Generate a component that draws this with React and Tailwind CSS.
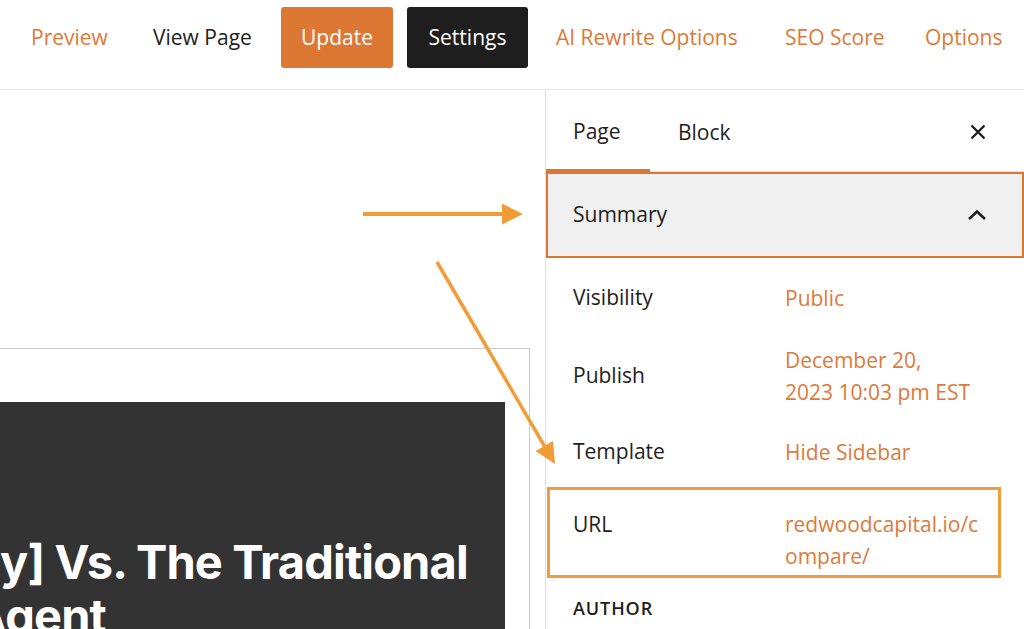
import React from "react";

function XIcon() {
  return (
    <svg width="18" height="18" viewBox="0 0 18 18" fill="none">
      <path d="M2.5 2.5 L15.5 15.5 M15.5 2.5 L2.5 15.5" stroke="#1e1e1e" strokeWidth="2.4" strokeLinecap="butt" />
    </svg>
  );
}

function ChevronUp() {
  return (
    <svg width="20" height="12" viewBox="0 0 20 12" fill="none">
      <path d="M2 10 L10 2.5 L18 10" stroke="#1e1e1e" strokeWidth="2.6" strokeLinecap="butt" strokeLinejoin="miter" />
    </svg>
  );
}

function Row({ label, children, className = "" }) {
  return (
    <div className={"flex " + className}>
      <div className="w-[212px] shrink-0 flex items-center text-[#1e1e1e]">{label}</div>
      <div className="text-[#de7a38] leading-[32px]">{children}</div>
    </div>
  );
}

export default function App() {
  return (
    <div className="relative w-[1024px] h-[629px] overflow-hidden bg-white font-['Open_Sans',sans-serif] text-[21px] text-[#1e1e1e]">
      {/* Top bar */}
      <div className="h-[90px] border-b border-[#e4e4e4] pt-[7px] pl-[31px]">
        <div className="h-[61px] flex items-center">
          <div className="w-[122px] text-[#de7a38]">Preview</div>
          <div className="w-[128px] text-[#1e1e1e]">View Page</div>
          <div className="w-[112px] h-[61px] rounded-[3px] bg-[#dd7834] text-white flex items-center justify-center">Update</div>
          <div className="ml-[14px] w-[121px] h-[61px] rounded-[3px] bg-[#1e1e1e] text-white flex items-center justify-center">Settings</div>
          <div className="ml-[28px] w-[229px] text-[#de7a38]">AI Rewrite Options</div>
          <div className="w-[140px] text-[#de7a38]">SEO Score</div>
          <div className="text-[#de7a38]">Options</div>
        </div>
      </div>

      <div className="flex h-[539px]">
        {/* Canvas */}
        <div className="w-[545px] shrink-0 overflow-hidden pt-[258px]">
          <div className="-ml-[10px] w-[540px] h-[400px] border border-[#c9c9c9] pt-[53px] pr-[24px]">
            <div className="h-[340px] bg-[#333333] overflow-hidden pt-[133px] pl-[10px]">
              <div className="font-['Inter',sans-serif] font-bold text-white text-[47px] leading-[54px] tracking-[-0.018em] whitespace-nowrap">
                <div className="-ml-[1px]">y] Vs. The Traditional</div>
                <div className="-ml-[29px]">Agent</div>
              </div>
            </div>
          </div>
        </div>

        {/* Sidebar */}
        <div className="flex-1 border-l border-[#e0e0e0] flex flex-col">
          <div className="h-[82px] flex">
            <div className="w-[104px] pl-[27px] pt-[5px] flex items-center border-b-[3px] border-[#dc7633]">Page</div>
            <div className="w-[100px] pl-[28px] pt-[3px] flex items-center border-b border-[#e2e2e2]">
              <span className="-mb-[2px]">Block</span>
            </div>
            <div className="flex-1 flex items-center justify-end pr-[37px] border-b border-[#e2e2e2]">
              <div className="mt-[2px]"><XIcon /></div>
            </div>
          </div>

          <div className="h-[86px] border-2 border-[#dc7633] bg-[#f0f0f0] flex items-center justify-between pl-[25px] pr-[35px]">
            <span>Summary</span>
            <ChevronUp />
          </div>

          <div className="pt-[24px] pl-[27px]">
            <Row label="Visibility" className="h-[32px]">Public</Row>
            <Row label="Publish" className="mt-[30px]">
              <div>December 20,</div>
              <div>2023 10:03 pm EST</div>
            </Row>
            <Row label="Template" className="mt-[28px] h-[32px]">Hide Sidebar</Row>
          </div>

          <div className="mt-[19px] ml-[1px] w-[454px] border-[3px] border-[#f39b37] pt-[18px] pb-[3px] pl-[23px]">
            <div className="flex">
              <div className="w-[212px] shrink-0 leading-[32px]">URL</div>
              <div className="text-[#de7a38] leading-[32px]">
                <div>redwoodcapital.io/c</div>
                <div>ompare/</div>
              </div>
            </div>
          </div>

          <div className="mt-[18px] pl-[27px] text-[18px] leading-[24px] font-semibold tracking-[0.05em] uppercase">AUTHOR</div>
        </div>
      </div>

      {/* Annotation arrows */}
      <svg className="absolute inset-0 pointer-events-none" width="1024" height="629" viewBox="0 0 1024 629">
        <line x1="363" y1="214" x2="503" y2="214" stroke="#f29c38" strokeWidth="4" />
        <polygon points="502,203.5 523,214 502,224.5" fill="#f29c38" />
        <line x1="437" y1="262" x2="545" y2="447" stroke="#f29c38" strokeWidth="3.5" />
        <polygon points="535.5,451 553,441 555,464" fill="#f29c38" />
      </svg>
    </div>
  );
}
